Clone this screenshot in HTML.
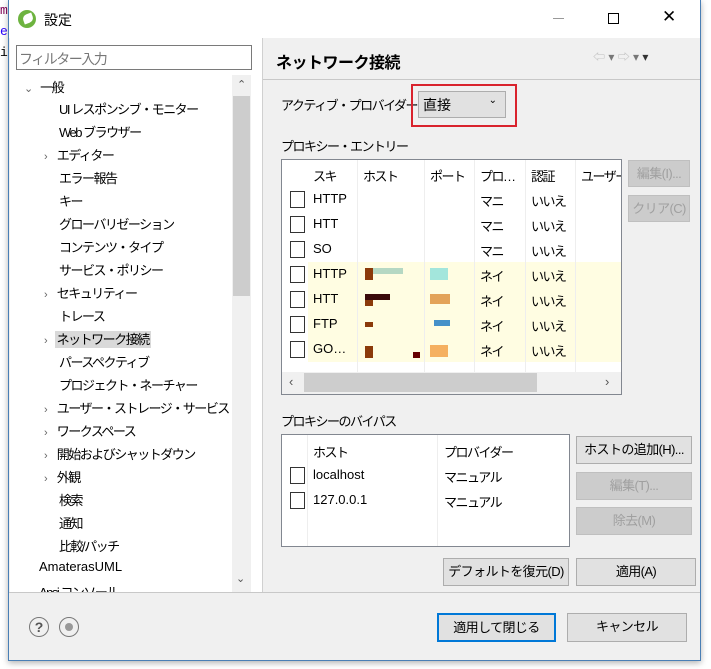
<!DOCTYPE html>
<html><head><meta charset="utf-8"><style>
*{box-sizing:border-box;margin:0;padding:0}
body{width:711px;height:669px;background:#fff;position:relative;overflow:hidden;font-family:"Liberation Sans","Noto Sans CJK JP",sans-serif;font-size:13px;color:#000;letter-spacing:-1.5px}
.l{letter-spacing:0}
.a{position:absolute}
.win{left:8px;top:0;width:693px;height:661px;border:1px solid #4a7fb5;border-top:none;background:#f0f0f0;box-shadow:0 2px 6px rgba(0,0,0,.3)}
.btn{position:absolute;background:#e1e1e1;border:1px solid #adadad;text-align:center;line-height:25px;white-space:nowrap;letter-spacing:-0.6px}
.dis{color:#a0a0a0;background:#ccc;border-color:#bfbfbf}
.tr{position:absolute;left:0;white-space:nowrap}
.cb{position:absolute;width:15px;height:17px;border:1px solid #333;background:#fff}
.cell{position:absolute;white-space:nowrap}
</style></head><body>
<div class="a l" style="left:0;top:0;font-family:'Liberation Mono',monospace;font-size:13px;line-height:21px;color:#7f0055">m<br><span style="color:#2a00ff">e</span><br><span style="color:#000">i</span></div>
<div class="a win"></div>
<div class="a" style="left:9px;top:0;width:691px;height:38px;background:#fff"></div>
<div class="a" style="left:18px;top:10px;width:18px;height:18px;border-radius:50%;background:#6db33f"></div>
<div class="a" style="left:23px;top:14px;width:10px;height:9px;border-radius:50% 0;background:#fff;transform:rotate(-20deg)"></div>
<div class="a" style="left:44px;top:10px;font-size:14px;letter-spacing:0">設定</div>
<div class="a" style="left:553px;top:18px;width:11px;height:1px;background:#999"></div>
<div class="a" style="left:608px;top:13px;width:11px;height:11px;border:1px solid #000"></div>
<div class="a" style="left:662px;top:7px;font-size:17px">✕</div>
<div class="a" style="left:10px;top:38px;width:252px;height:555px;background:#fff"></div>
<div class="a" style="left:16px;top:45px;width:236px;height:25px;border:1px solid #7a7a7a;color:#777;font-size:14px;padding:3px 2px">フィルター入力</div>
<div class="a" style="left:232px;top:75px;width:19px;height:517px;background:#f0f0f0"></div>
<div class="a" style="left:233px;top:96px;width:17px;height:200px;background:#cdcdcd"></div>
<div class="a" style="left:237px;top:78px;font-size:11px;color:#555">⌃</div>
<div class="a" style="left:236px;top:572px;font-size:11px;color:#555">⌄</div>
<div class="a" style="left:20px;top:75px;width:212px;height:517px;overflow:hidden">
<div class="tr" style="top:2px;left:4px"><span style="color:#666;font-size:11px">⌄</span>&nbsp;&nbsp;&nbsp; 一般</div>
<div class="tr" style="top:24px;left:39px">UI レスポンシブ・モニター</div>
<div class="tr" style="top:47px;left:39px">Web ブラウザー</div>
<div class="tr" style="top:70px;left:24px"><span style="color:#666;font-size:11px">›</span>&nbsp;&nbsp;&nbsp;&nbsp; エディター</div>
<div class="tr" style="top:93px;left:39px">エラー報告</div>
<div class="tr" style="top:116px;left:39px">キー</div>
<div class="tr" style="top:139px;left:39px">グローバリゼーション</div>
<div class="tr" style="top:162px;left:39px">コンテンツ・タイプ</div>
<div class="tr" style="top:185px;left:39px">サービス・ポリシー</div>
<div class="tr" style="top:208px;left:24px"><span style="color:#666;font-size:11px">›</span>&nbsp;&nbsp;&nbsp;&nbsp; セキュリティー</div>
<div class="tr" style="top:231px;left:39px">トレース</div>
<div class="tr" style="top:254px;left:24px"><span style="color:#666;font-size:11px">›</span>&nbsp;&nbsp;&nbsp; <span style="background:#d9d9d9;padding:1px 2px">ネットワーク接続</span></div>
<div class="tr" style="top:277px;left:39px">パースペクティブ</div>
<div class="tr" style="top:300px;left:39px">プロジェクト・ネーチャー</div>
<div class="tr" style="top:323px;left:24px"><span style="color:#666;font-size:11px">›</span>&nbsp;&nbsp;&nbsp;&nbsp; ユーザー・ストレージ・サービス</div>
<div class="tr" style="top:346px;left:24px"><span style="color:#666;font-size:11px">›</span>&nbsp;&nbsp;&nbsp;&nbsp; ワークスペース</div>
<div class="tr" style="top:369px;left:24px"><span style="color:#666;font-size:11px">›</span>&nbsp;&nbsp;&nbsp;&nbsp; 開始およびシャットダウン</div>
<div class="tr" style="top:392px;left:24px"><span style="color:#666;font-size:11px">›</span>&nbsp;&nbsp;&nbsp;&nbsp; 外観</div>
<div class="tr" style="top:415px;left:39px">検索</div>
<div class="tr" style="top:438px;left:39px">通知</div>
<div class="tr" style="top:461px;left:39px">比較/パッチ</div>
<div class="tr l" style="top:484px;left:19px">AmaterasUML</div>
<div class="tr" style="top:507px;left:19px">Ansi コンソール</div>
</div>
<div class="a" style="left:262px;top:38px;width:1px;height:555px;background:#d0d0d0"></div>
<div class="a" style="left:276px;top:49px;font-size:16px;font-weight:bold;letter-spacing:-0.5px">ネットワーク接続</div>
<div class="a l" style="left:593px;top:48px;font-size:12px;color:#bbb">⇦ <span style="color:#777">▾</span> ⇨ <span style="color:#777">▾</span> <span style="color:#333">▾</span></div>
<div class="a" style="left:263px;top:79px;width:437px;height:1px;background:#c8c8c8"></div>
<div class="a" style="left:281px;top:95px">アクティブ・プロバイダー</div>
<div class="a" style="left:411px;top:84px;width:106px;height:43px;border:2px solid #d9232d"></div>
<div class="a" style="left:418px;top:91px;width:88px;height:27px;background:#e1e1e1;border:1px solid #adadad;padding:3px 4px;font-size:14px;letter-spacing:0">直接<span style="position:absolute;right:8px;top:3px;font-size:10px">⌄</span></div>
<div class="a" style="left:281px;top:136px">プロキシー・エントリー</div>
<div class="a" style="left:281px;top:159px;width:341px;height:236px;border:1px solid #828790;background:#fff;overflow:hidden">
 <div class="a" style="left:26px;top:102px;width:314px;height:100px;background:#fffde2"></div>
 <div class="cell" style="left:31px;top:6px">スキ</div><div class="cell" style="left:81px;top:6px">ホスト</div><div class="cell" style="left:148px;top:6px">ポート</div><div class="cell" style="left:198px;top:6px">プロ…</div><div class="cell" style="left:249px;top:6px">認証</div><div class="cell" style="left:299px;top:6px">ユーザー</div>
 <div class="a" style="left:75px;top:0;width:1px;height:212px;background:#eee"></div><div class="a" style="left:142px;top:0;width:1px;height:212px;background:#eee"></div><div class="a" style="left:192px;top:0;width:1px;height:212px;background:#eee"></div><div class="a" style="left:243px;top:0;width:1px;height:212px;background:#eee"></div><div class="a" style="left:293px;top:0;width:1px;height:212px;background:#eee"></div>
 <div class="cb" style="left:8px;top:31px"></div><div class="cell l" style="left:31px;top:31px">HTTP</div><div class="cell" style="left:198px;top:31px">マニ</div><div class="cell" style="left:249px;top:31px">いいえ</div>
 <div class="cb" style="left:8px;top:56px"></div><div class="cell l" style="left:31px;top:56px">HTT</div><div class="cell" style="left:198px;top:56px">マニ</div><div class="cell" style="left:249px;top:56px">いいえ</div>
 <div class="cb" style="left:8px;top:81px"></div><div class="cell l" style="left:31px;top:81px">SO</div><div class="cell" style="left:198px;top:81px">マニ</div><div class="cell" style="left:249px;top:81px">いいえ</div>
 <div class="cb" style="left:8px;top:106px"></div><div class="cell l" style="left:31px;top:106px">HTTP</div><div class="cell" style="left:198px;top:106px">ネイ</div><div class="cell" style="left:249px;top:106px">いいえ</div>
 <div class="cb" style="left:8px;top:131px"></div><div class="cell l" style="left:31px;top:131px">HTT</div><div class="cell" style="left:198px;top:131px">ネイ</div><div class="cell" style="left:249px;top:131px">いいえ</div>
 <div class="cb" style="left:8px;top:156px"></div><div class="cell l" style="left:31px;top:156px">FTP</div><div class="cell" style="left:198px;top:156px">ネイ</div><div class="cell" style="left:249px;top:156px">いいえ</div>
 <div class="cb" style="left:8px;top:181px"></div><div class="cell l" style="left:31px;top:181px">GO…</div><div class="cell" style="left:198px;top:181px">ネイ</div><div class="cell" style="left:249px;top:181px">いいえ</div>
 <div class="a" style="left:83px;top:108px;width:8px;height:12px;background:#8b3a0a"></div><div class="a" style="left:91px;top:108px;width:30px;height:6px;background:#b5d8c3"></div>
 <div class="a" style="left:83px;top:134px;width:25px;height:6px;background:#3a0a0a"></div><div class="a" style="left:83px;top:140px;width:8px;height:6px;background:#8b3a0a"></div>
 <div class="a" style="left:83px;top:162px;width:8px;height:5px;background:#8b3a0a"></div>
 <div class="a" style="left:83px;top:186px;width:8px;height:12px;background:#8b3a0a"></div><div class="a" style="left:131px;top:192px;width:7px;height:6px;background:#600"></div>
 <div class="a" style="left:148px;top:108px;width:18px;height:12px;background:#a3e6dc"></div><div class="a" style="left:148px;top:134px;width:20px;height:10px;background:#e3a35a"></div><div class="a" style="left:152px;top:160px;width:16px;height:6px;background:#4591c9"></div><div class="a" style="left:148px;top:185px;width:18px;height:12px;background:#f5b060"></div>
 <div class="a" style="left:0;top:212px;width:339px;height:22px;background:#f0f0f0"></div>
 <div class="a" style="left:22px;top:213px;width:233px;height:19px;background:#cdcdcd"></div>
 <div class="a" style="left:7px;top:214px;font-size:13px;color:#555">‹</div><div class="a" style="left:323px;top:214px;font-size:13px;color:#555">›</div>
</div>
<div class="btn dis" style="left:628px;top:160px;width:62px;height:27px">編集(I)...</div>
<div class="btn dis" style="left:628px;top:195px;width:62px;height:27px">クリア(C)</div>
<div class="a" style="left:281px;top:411px">プロキシーのバイパス</div>
<div class="a" style="left:281px;top:434px;width:289px;height:113px;border:1px solid #828790;background:#fff">
 <div class="a" style="left:25px;top:0;width:1px;height:111px;background:#eee"></div><div class="a" style="left:155px;top:0;width:1px;height:111px;background:#eee"></div>
 <div class="cell" style="left:31px;top:7px">ホスト</div><div class="cell" style="left:162px;top:7px">プロバイダー</div>
 <div class="cb" style="left:8px;top:32px"></div><div class="cell l" style="left:31px;top:32px">localhost</div><div class="cell" style="left:162px;top:32px">マニュアル</div>
 <div class="cb" style="left:8px;top:57px"></div><div class="cell l" style="left:31px;top:57px">127.0.0.1</div><div class="cell" style="left:162px;top:57px">マニュアル</div>
</div>
<div class="btn" style="left:576px;top:436px;width:116px;height:28px">ホストの追加(H)...</div>
<div class="btn dis" style="left:576px;top:472px;width:116px;height:28px">編集(T)...</div>
<div class="btn dis" style="left:576px;top:507px;width:116px;height:28px">除去(M)</div>
<div class="btn" style="left:443px;top:558px;width:126px;height:28px">デフォルトを復元(D)</div>
<div class="btn" style="left:576px;top:558px;width:120px;height:28px">適用(A)</div>
<div class="a" style="left:9px;top:592px;width:691px;height:1px;background:#c8c8c8"></div>
<div class="a" style="left:29px;top:617px;width:20px;height:20px;border:1px solid #777;border-radius:50%;text-align:center;line-height:18px;font-size:14px;color:#555;font-weight:bold;letter-spacing:0">?</div>
<div class="a" style="left:59px;top:617px;width:20px;height:20px;border:1px solid #777;border-radius:50%"></div>
<div class="a" style="left:65px;top:623px;width:8px;height:8px;background:#999;border-radius:50%"></div>
<div class="btn" style="left:437px;top:613px;width:119px;height:29px;border:2px solid #0078d7;line-height:25px">適用して閉じる</div>
<div class="btn" style="left:567px;top:613px;width:120px;height:29px">キャンセル</div>
</body></html>
